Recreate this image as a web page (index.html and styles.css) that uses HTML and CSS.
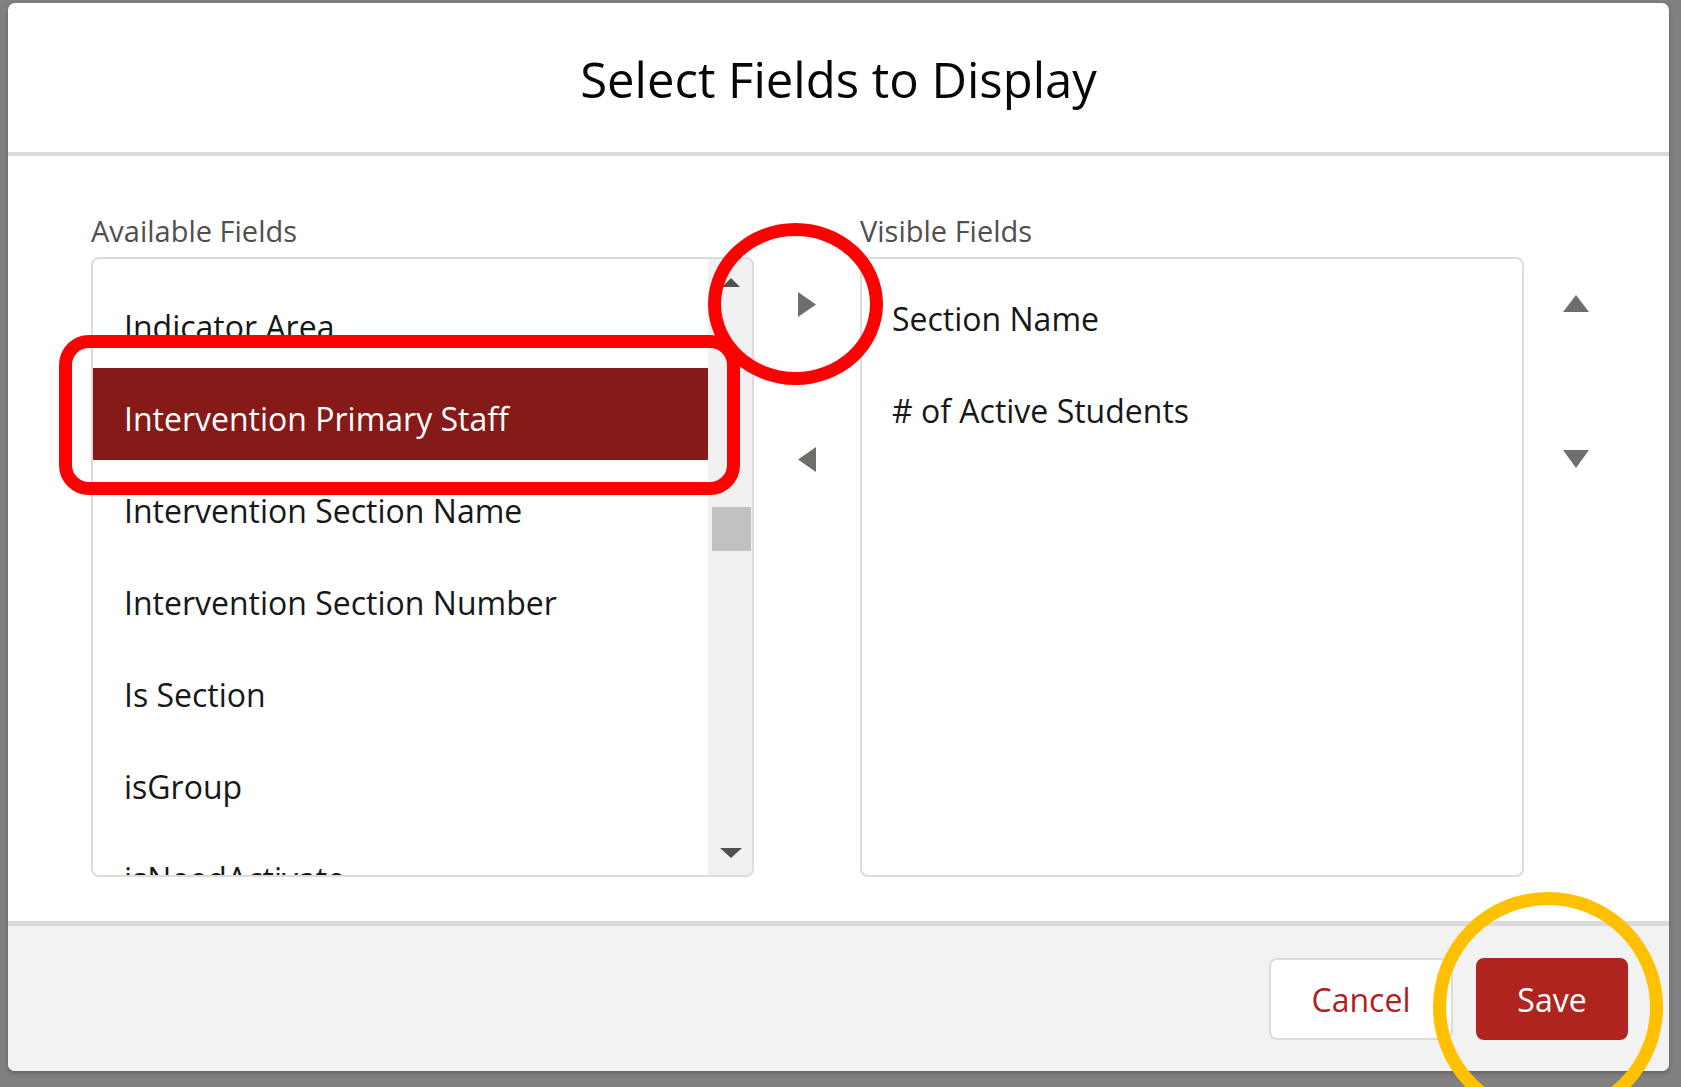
FILE: index.html
```html
<!DOCTYPE html>
<html lang="en">
<head>
<meta charset="utf-8">
<title>Select Fields to Display</title>
<link rel="stylesheet" href="styles.css">
</head>
<body>
<div class="modal">
  <header class="modal-header">
    <h1 class="title">Select Fields to Display</h1>
  </header>
  <section class="modal-body">
    <div class="col col-list">
      <div class="label">Available Fields</div>
      <div class="box box-left">
        <ul class="list list-left">
          <li class="item">Indicator Area</li>
          <li class="item selected">Intervention Primary Staff</li>
          <li class="item">Intervention Section Name</li>
          <li class="item">Intervention Section Number</li>
          <li class="item">Is Section</li>
          <li class="item">isGroup</li>
          <li class="item">isNeedActivate</li>
        </ul>
        <div class="scrollbar">
          <svg class="sb-up" width="18" height="9" viewBox="0 0 18 9"><polygon points="9,0 18,9 0,9" fill="#505050"/></svg>
          <div class="sb-thumb"></div>
          <svg class="sb-down" width="22" height="10" viewBox="0 0 22 10"><polygon points="0,0 22,0 11,10" fill="#505050"/></svg>
        </div>
      </div>
    </div>
    <div class="col col-move">
      <button class="icon-btn btn-add" aria-label="Move selection to Visible Fields">
        <svg width="18" height="25" viewBox="0 0 18 25"><polygon points="0,0 18,12.5 0,25" fill="#706e6b"/></svg>
      </button>
      <button class="icon-btn btn-remove" aria-label="Move selection to Available Fields">
        <svg width="18" height="25" viewBox="0 0 18 25"><polygon points="18,0 0,12.5 18,25" fill="#706e6b"/></svg>
      </button>
    </div>
    <div class="col col-list col-right">
      <div class="label">Visible Fields</div>
      <div class="box box-right">
        <ul class="list list-right">
          <li class="item">Section Name</li>
          <li class="item"># of Active Students</li>
        </ul>
      </div>
    </div>
    <div class="col col-order">
      <button class="icon-btn btn-up" aria-label="Move up">
        <svg width="26" height="17" viewBox="0 0 26 17"><polygon points="13,0 26,17 0,17" fill="#706e6b"/></svg>
      </button>
      <button class="icon-btn btn-down" aria-label="Move down">
        <svg width="26" height="18" viewBox="0 0 26 18"><polygon points="0,0 26,0 13,18" fill="#706e6b"/></svg>
      </button>
    </div>
  </section>
  <footer class="modal-footer">
    <button class="btn btn-neutral">Cancel</button>
    <button class="btn btn-brand">Save</button>
  </footer>
</div>
<div class="mark mark-rect"></div>
<div class="mark mark-circle"></div>
<div class="mark mark-gold"></div>
</body>
</html>
```
FILE: styles.css
```css
html, body {
  margin: 0;
  padding: 0;
  width: 1681px;
  height: 1087px;
  overflow: hidden;
}
body {
  background: #808080;
  font-family: "Open Sans", "Noto Sans", sans-serif;
  color: #181818;
  position: relative;
}
.modal {
  margin: 3px 0 0 8px;
  width: 1661px;
  height: 1068px;
  background: #fff;
  border-radius: 7px;
  overflow: hidden;
  display: flex;
  flex-direction: column;
  box-shadow: 0 2px 4px rgba(0,0,0,0.25);
}
.modal-header {
  height: 149px;
  border-bottom: 4px solid #dddbda;
  display: flex;
  align-items: center;
  justify-content: center;
  flex: none;
}
.title {
  margin: 0;
  font-size: 49px;
  font-weight: 400;
  line-height: 60px;
  color: #080707;
  padding-top: 2px;
}
.modal-body {
  height: 765px;
  flex: none;
  display: flex;
  padding-left: 83px;
  box-sizing: border-box;
}
.col-list {
  width: 663px;
  display: flex;
  flex-direction: column;
}
.col-right {
  width: 664px;
}
.label {
  padding-top: 55px;
  height: 40px;
  line-height: 40px;
  margin-bottom: 6px;
  font-size: 29px;
  color: #514f4d;
}
.box {
  height: 620px;
  border: 2px solid #dcdcdc;
  border-radius: 8px;
  box-sizing: border-box;
  overflow: hidden;
  display: flex;
}
.list {
  list-style: none;
  margin: 0;
  flex: 1;
  overflow: hidden;
}
.list-left {
  padding: 17px 0 0 0;
}
.list-right {
  padding: 10px 0 0 0;
}
.item {
  height: 92px;
  box-sizing: border-box;
  line-height: 83px;
  font-size: 32px;
  white-space: nowrap;
  color: #181818;
}
.list-left .item {
  padding: 9px 0 0 31px;
}
.list-right .item {
  padding: 8px 0 0 30px;
}
.item.selected {
  background: #861a18;
  color: #fff;
}
.scrollbar {
  width: 44px;
  background: #f1f1f1;
  display: flex;
  flex-direction: column;
  align-items: center;
  padding-left: 2px;
  box-sizing: border-box;
}
.sb-up {
  display: block;
  margin-top: 19px;
}
.sb-thumb {
  width: 39px;
  height: 44px;
  background: #c1c1c1;
  margin-top: 220px;
}
.sb-down {
  display: block;
  margin-top: auto;
  margin-bottom: 17px;
}
.col-move {
  width: 106px;
  display: flex;
  flex-direction: column;
  align-items: center;
  padding-top: 101px;
  box-sizing: border-box;
}
.col-order {
  width: 104px;
  display: flex;
  flex-direction: column;
  align-items: center;
  padding-top: 101px;
  box-sizing: border-box;
}
.icon-btn {
  border: 0;
  background: transparent;
  padding: 0;
  margin: 0;
  display: block;
  line-height: 0;
}
.icon-btn svg {
  display: block;
}
.btn-add { margin-top: 35px; }
.btn-remove { margin-top: 130px; }
.btn-up { margin-top: 38px; }
.btn-down { margin-top: 138px; }
.modal-footer {
  flex: 1;
  border-top: 5px solid #dddbda;
  background: #f3f2f2;
  display: flex;
  align-items: center;
  justify-content: flex-end;
  padding-right: 41px;
  gap: 23px;
}
.btn {
  font-family: "Open Sans", "Noto Sans", sans-serif;
  font-size: 32px;
  height: 82px;
  border-radius: 8px;
  box-sizing: border-box;
  cursor: pointer;
  padding-top: 2px;
}
.btn-neutral {
  width: 184px;
  background: #fff;
  border: 2px solid #dddbda;
  color: #b0201f;
}
.btn-brand {
  width: 152px;
  background: #af241f;
  border: 2px solid #af241f;
  color: #fff;
}
.mark {
  position: absolute;
  box-sizing: border-box;
  pointer-events: none;
}
.mark-rect {
  left: 59px;
  top: 335px;
  width: 681px;
  height: 160px;
  border: 13px solid #ff0000;
  border-radius: 30px;
}
.mark-circle {
  left: 708px;
  top: 223px;
  width: 175px;
  height: 162px;
  border: 13px solid #ff0000;
  border-radius: 50%;
}
.mark-gold {
  left: 1433px;
  top: 892px;
  width: 230px;
  height: 230px;
  border: 13px solid #ffc000;
  border-radius: 50%;
}
```
